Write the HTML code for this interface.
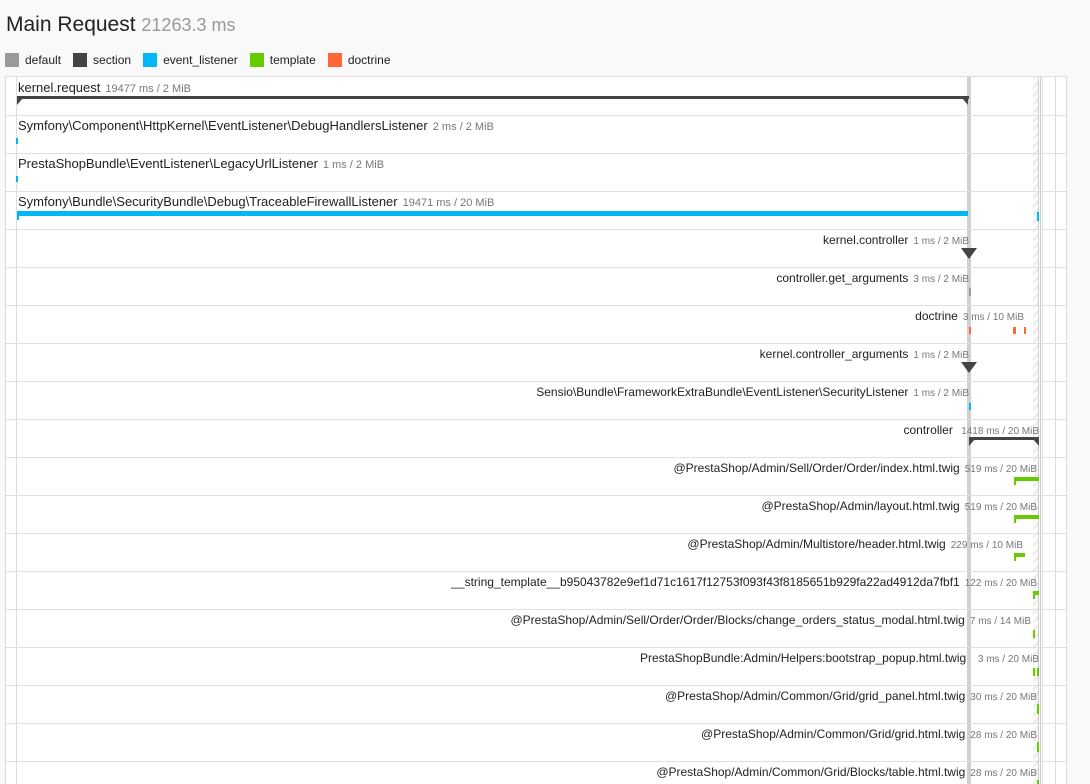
<!DOCTYPE html>
<html><head><meta charset="utf-8"><style>
body{margin:0;width:1090px;height:784px;background:#f9f9f9;font-family:"Liberation Sans",Arial,sans-serif;overflow:hidden;position:relative}
h1{position:absolute;left:6px;top:13px;margin:0;font-size:21px;font-weight:normal;color:#222}
h1 span{color:#999;font-size:18px}
.leg{position:absolute;top:53px;left:5px;font-size:12px;color:#222}
.leg i{display:inline-block;width:14px;height:14px;vertical-align:-3px;margin-right:6px}
.leg b{font-weight:normal;margin-right:12px}
#tl{position:absolute;left:5px;top:76px;width:1060px;height:707px;background:#fff;border:1px solid #ddd;border-bottom:0;overflow:hidden}
#w{position:absolute;left:0;top:1px;width:1060px;height:706px}
.v{position:absolute;top:0;bottom:0;background:#ddd;width:1px}
.row{position:absolute;left:0;width:1060px;height:37px;border-bottom:1px solid #e0e0e0}
.lab{position:absolute;top:2px;font-size:13px;color:#222;white-space:nowrap}
.lab small{font-size:11px;color:#777;margin-left:5px}
.r{text-align:right;font-size:12px;top:3px}
.r small{font-size:10px}
.b{position:absolute}
.sec{position:absolute;height:3px;background:#444}
.tri{position:absolute;width:0;height:0;border-left:8px solid transparent;border-right:8px solid transparent;border-top:11px solid #444}
</style></head><body>
<h1>Main Request <span>21263.3 ms</span></h1>
<div class="leg"><i style="background:#999"></i><b>default</b><i style="background:#444"></i><b>section</b><i style="background:#00b8f5"></i><b>event_listener</b><i style="background:#66cc00"></i><b>template</b><i style="background:#ff6633"></i><b>doctrine</b></div>
<div id="tl">
<div class="v" style="left:10px"></div>
<div class="v" style="left:961px;width:4px;background:#d0d0d0"></div>
<div class="v" style="left:1027px;width:5px;background:repeating-linear-gradient(135deg,#eee 0 3px,#fff 3px 6px)"></div>
<div class="v" style="left:1032px;background:#ccc"></div>
<div class="v" style="left:1034px;background:#ccc"></div>
<div class="v" style="left:1036px"></div>
<div class="v" style="left:1049px"></div>
<div id="w">
<div class="row" style="top:0"><div class="lab" style="left:12px">kernel.request<small>19477 ms / 2 MiB</small></div>
<div class="sec" style="left:11px;top:18px;width:952px"></div>
<div class="b" style="left:11px;top:20px;border-top:7px solid #444;border-right:6px solid transparent"></div>
<div class="b" style="left:956px;top:20px;border-top:7px solid #444;border-left:6px solid transparent"></div></div>

<div class="row" style="top:38px"><div class="lab" style="left:12px">Symfony\Component\HttpKernel\EventListener\DebugHandlersListener<small>2 ms / 2 MiB</small></div><div class="b" style="left:10px;top:22px;width:2px;height:6px;background:#00b8f5"></div></div>
<div class="row" style="top:76px"><div class="lab" style="left:12px">PrestaShopBundle\EventListener\LegacyUrlListener<small>1 ms / 2 MiB</small></div><div class="b" style="left:10px;top:22px;width:2px;height:6px;background:#00b8f5"></div></div>
<div class="row" style="top:114px"><div class="lab" style="left:12px">Symfony\Bundle\SecurityBundle\Debug\TraceableFirewallListener<small>19471 ms / 20 MiB</small></div><div class="b" style="left:11px;top:19px;width:951px;height:5px;background:#00b8f5"></div><div class="b" style="left:11px;top:19px;width:2px;height:9px;background:#00b8f5"></div><div class="b" style="left:1031px;top:20px;width:2px;height:9px;background:#00b8f5"></div></div>

<div class="row" style="top:152px"><div class="lab r" style="right:97px">kernel.controller<small>1 ms / 2 MiB</small></div><div class="tri" style="left:955px;top:18px"></div></div>
<div class="row" style="top:190px"><div class="lab r" style="right:97px">controller.get_arguments<small>3 ms / 2 MiB</small></div><div class="b" style="left:963px;top:20px;width:2px;height:8px;background:#999"></div></div>
<div class="row" style="top:228px"><div class="lab r" style="right:42px">doctrine<small>3 ms / 10 MiB</small></div><div class="b" style="left:963px;top:21px;width:2px;height:7px;background:#ff6633"></div><div class="b" style="left:1007px;top:21px;width:3px;height:7px;background:#ff6633"></div><div class="b" style="left:1018px;top:21px;width:2px;height:7px;background:#ff6633"></div></div>
<div class="row" style="top:266px"><div class="lab r" style="right:97px">kernel.controller_arguments<small>1 ms / 2 MiB</small></div><div class="tri" style="left:955px;top:18px"></div></div>
<div class="row" style="top:304px"><div class="lab r" style="right:97px">Sensio\Bundle\FrameworkExtraBundle\EventListener\SecurityListener<small>1 ms / 2 MiB</small></div><div class="b" style="left:963px;top:21px;width:2px;height:7px;background:#00b8f5"></div></div>
<div class="row" style="top:342px"><div class="lab r" style="right:27px">controller&nbsp;<small>1418 ms / 20 MiB</small></div><div class="sec" style="left:963px;top:17px;width:70px"></div><div class="b" style="left:963px;top:19px;border-top:7px solid #444;border-right:6px solid transparent"></div><div class="b" style="left:1027px;top:19px;border-top:7px solid #444;border-left:6px solid transparent"></div></div>

<div class="row" style="top:380px"><div class="lab r" style="right:29px">@PrestaShop/Admin/Sell/Order/Order/index.html.twig<small>519 ms / 20 MiB</small></div><div class="b" style="left:1008px;top:19px;width:25px;height:4px;background:#66cc00"></div><div class="b" style="left:1008px;top:19px;width:2px;height:8px;background:#66cc00"></div></div>
<div class="row" style="top:418px"><div class="lab r" style="right:29px">@PrestaShop/Admin/layout.html.twig<small>519 ms / 20 MiB</small></div><div class="b" style="left:1008px;top:19px;width:25px;height:4px;background:#66cc00"></div><div class="b" style="left:1008px;top:19px;width:2px;height:8px;background:#66cc00"></div></div>
<div class="row" style="top:456px"><div class="lab r" style="right:43px">@PrestaShop/Admin/Multistore/header.html.twig<small>229 ms / 10 MiB</small></div><div class="b" style="left:1008px;top:19px;width:11px;height:4px;background:#66cc00"></div><div class="b" style="left:1008px;top:19px;width:2px;height:8px;background:#66cc00"></div></div>
<div class="row" style="top:494px"><div class="lab r" style="right:29px">__string_template__b95043782e9ef1d71c1617f12753f093f43f8185651b929fa22ad4912da7fbf1<small>122 ms / 20 MiB</small></div><div class="b" style="left:1027px;top:19px;width:6px;height:4px;background:#66cc00"></div><div class="b" style="left:1027px;top:19px;width:2px;height:8px;background:#66cc00"></div></div>
<div class="row" style="top:532px"><div class="lab r" style="right:35px">@PrestaShop/Admin/Sell/Order/Order/Blocks/change_orders_status_modal.html.twig<small>7 ms / 14 MiB</small></div><div class="b" style="left:1027px;top:20px;width:2px;height:8px;background:#66cc00"></div></div>
<div class="row" style="top:570px"><div class="lab r" style="right:27px">PrestaShopBundle:Admin/Helpers:bootstrap_popup.html.twig&nbsp;&nbsp;<small>3 ms / 20 MiB</small></div><div class="b" style="left:1027px;top:20px;width:2px;height:8px;background:#66cc00"></div><div class="b" style="left:1031px;top:20px;width:2px;height:8px;background:#66cc00"></div></div>
<div class="row" style="top:608px"><div class="lab r" style="right:29px">@PrestaShop/Admin/Common/Grid/grid_panel.html.twig<small>30 ms / 20 MiB</small></div><div class="b" style="left:1031px;top:18px;width:2px;height:10px;background:#66cc00"></div></div>
<div class="row" style="top:646px"><div class="lab r" style="right:29px">@PrestaShop/Admin/Common/Grid/grid.html.twig<small>28 ms / 20 MiB</small></div><div class="b" style="left:1031px;top:18px;width:2px;height:10px;background:#66cc00"></div></div>
<div class="row" style="top:684px"><div class="lab r" style="right:29px">@PrestaShop/Admin/Common/Grid/Blocks/table.html.twig<small>28 ms / 20 MiB</small></div><div class="b" style="left:1031px;top:18px;width:2px;height:10px;background:#66cc00"></div></div>
</div>
</div>
</body></html>
